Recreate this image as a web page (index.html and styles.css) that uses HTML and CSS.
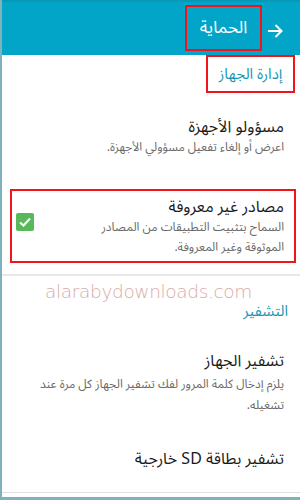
FILE: index.html
```html
<!DOCTYPE html>
<html lang="ar" dir="rtl">
<head>
<meta charset="utf-8">
<link rel="stylesheet" href="styles.css">
</head>
<body>
<div class="screen">
  <header class="header">
    <svg class="back" width="16" height="14" viewBox="0 0 16 14"><path d="M1 7H14.5M8.5 1L14.5 7L8.5 13" fill="none" stroke="#fff" stroke-width="2"/></svg>
    <span class="title mark">الحماية</span>
  </header>
  <div class="content">
    <div class="cat-row"><span class="cat mark">إدارة الجهاز</span></div>
    <div class="item first">
      <div class="item-title">مسؤولو الأجهزة</div>
      <div class="item-sub">اعرض أو إلغاء تفعيل مسؤولي الأجهزة.</div>
    </div>
    <div class="item boxed mark">
      <div class="item-text">
        <div class="item-title">مصادر غير معروفة</div>
        <div class="item-sub">السماح بتثبيت التطبيقات من المصادر الموثوقة وغير المعروفة.</div>
      </div>
      <span class="check"><svg width="14" height="12" viewBox="0 0 14 12"><path d="M2 6.5L5.5 9.5L12 2.5" fill="none" stroke="#fff" stroke-width="2.2"/></svg></span>
    </div>
    <div class="divider thick"></div>
    <div class="watermark" dir="ltr">alarabydownloads.com</div>
    <div class="cat plain">التشفير</div>
    <div class="item enc">
      <div class="item-title">تشفير الجهاز</div>
      <div class="item-sub">يلزم إدخال كلمة المرور لفك تشفير الجهاز كل مرة عند تشغيله.</div>
    </div>
    <div class="item sd">
      <div class="item-title">تشفير بطاقة SD خارجية</div>
    </div>
    <div class="divider"></div>
  </div>
  <div class="bottom-bar"></div>
</div>
</body>
</html>
```
FILE: styles.css
```css
html, body {
  margin: 0;
  padding: 0;
  background: #fff;
}
body {
  font-family: "Noto Sans Arabic", "Noto Naskh Arabic", "Droid Arabic Naskh", "Noto Sans Arabic UI", "DejaVu Sans", sans-serif;
  width: 300px;
  height: 500px;
  overflow: hidden;
}
.screen {
  width: 300px;
  height: 500px;
  display: flex;
  flex-direction: column;
  border-left: 2px solid #7fb2ba;
  box-sizing: border-box;
}
.header {
  height: 55px;
  background: #02a4c8;
  border-top: 2px solid #0a96b6;
  box-sizing: border-box;
  display: flex;
  align-items: center;
  padding-right: 17px;
  gap: 5px;
  flex-shrink: 0;
}
.back {
  display: block;
  margin-top: 4px;
}
.mark {
  border: 2px solid #f0141c;
}
.title {
  color: #fff;
  font-size: 17px;
  height: 46px;
  width: 77px;
  box-sizing: border-box;
  display: flex;
  align-items: center;
  justify-content: center;
  margin-top: -2px;
  line-height: 20px;
}
.content {
  flex: 1;
  display: flex;
  flex-direction: column;
}
.cat-row {
  display: flex;
  padding-right: 5px;
}
.cat {
  color: #1797b6;
  font-size: 15px;
  line-height: 18px;
}
.cat-row .cat {
  height: 38px;
  width: 89px;
  box-sizing: border-box;
  display: flex;
  align-items: center;
  justify-content: center;
}
.item-title {
  color: #1a1a1a;
  font-size: 16px;
  line-height: 22px;
}
.item-sub {
  color: #6a6a6a;
  font-size: 12px;
  line-height: 20.5px;
}
.item {
  padding-right: 16px;
  padding-left: 16px;
}
.item.first {
  padding-top: 23px;
}
.boxed {
  margin: 30px 4px 0 8px;
  height: 74px;
  box-sizing: border-box;
  display: flex;
  align-items: flex-start;
  padding: 5px 10px 0 4px;
}
.item-text {
  flex: 1;
  padding-left: 50px;
}
.check {
  width: 18px;
  height: 18px;
  background: #58b95a;
  border-radius: 2px;
  display: flex;
  align-items: center;
  justify-content: center;
  margin-top: 17px;
  margin-right: 6px;
}
.divider {
  height: 1px;
  background: #e0e0e0;
}
.divider.thick {
  height: 2px;
  background: #e8e8e8;
  margin-top: 11px;
}
.watermark {
  font-family: "DejaVu Sans", sans-serif;
  color: #d9aaa8;
  font-size: 18.5px;
  text-align: left;
  padding-left: 43px;
  line-height: 22px;
  margin-top: 5px;
  font-weight: 300;
  letter-spacing: -0.35px;
}
.cat.plain {
  padding-right: 12px;
  line-height: 16px;
  margin-top: 0;
}
.item.enc {
  padding-top: 31px;
}
.item.enc .item-sub {
  line-height: 21px;
  margin-top: 2px;
}
.item.sd {
  padding-top: 32px;
  padding-bottom: 22px;
}
.bottom-bar {
  height: 3px;
  background: #7fb2ba;
  margin-left: -2px;
  flex-shrink: 0;
}
```
